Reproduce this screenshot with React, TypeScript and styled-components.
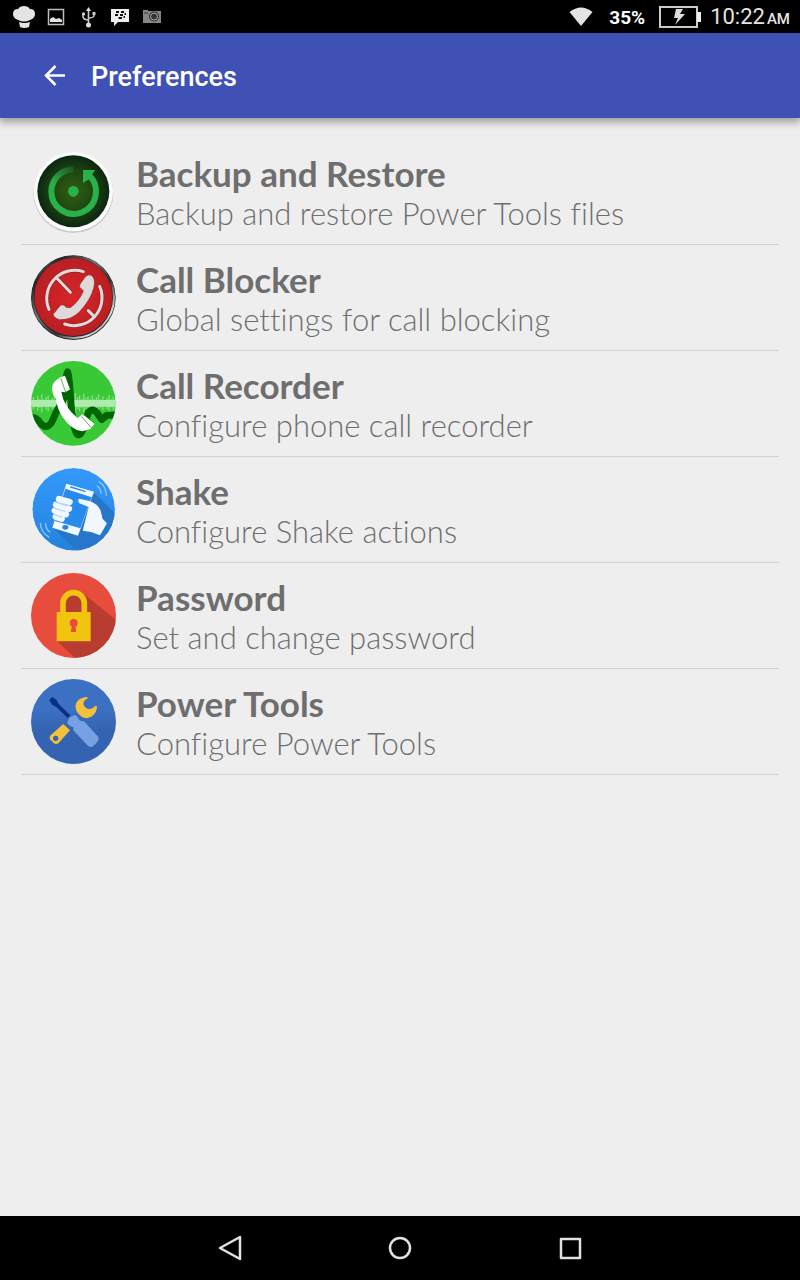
import React from "react";
import styled, { createGlobalStyle } from "styled-components";

const GlobalStyle = createGlobalStyle`
  * { box-sizing: border-box; }
  body { margin: 0; background: #eeeeee; font-family: Roboto, sans-serif; }
`;

const Screen = styled.div`
  display: flex;
  flex-direction: column;
  min-height: 100vh;
`;

const StatusBar = styled.div`
  display: flex;
  align-items: center;
  justify-content: space-between;
  height: 33px;
  padding: 0 10px 0 12px;
  background: #000;
  color: #e4e4e4;
`;

const StatusGroup = styled.div<{ $gap: number }>`
  display: flex;
  align-items: center;
  gap: ${(p) => p.$gap}px;
  svg { display: block; }
`;

const Percent = styled.span`
  color: #fff;
  font-size: 19px;
  line-height: 24px;
  font-weight: 700;
  padding: 2px 0 0 2px;
`;

const Clock = styled.span`
  font-size: 22px;
  line-height: 24px;
  padding-top: 2px;
  white-space: nowrap;
  small { font-size: 15px; font-weight: 500; padding-left: 2px; }
`;

const AppBar = styled.header`
  display: flex;
  align-items: center;
  gap: 20px;
  height: 85px;
  padding: 0 39px;
  background: #3f51b5;
  box-shadow: 0 3px 8px 1px rgba(0, 0, 0, 0.35);
`;

const IconButton = styled.button`
  display: flex;
  align-items: center;
  justify-content: center;
  width: 32px;
  height: 32px;
  padding: 0;
  border: 0;
  background: none;
  cursor: pointer;
`;

const Title = styled.h1`
  margin: 0;
  padding-top: 2px;
  color: #fff;
  font-size: 27px;
  line-height: 32px;
  font-weight: 500;
`;

const PreferenceList = styled.ul`
  flex: 1;
  margin: 0;
  padding: 21px;
  list-style: none;
`;

const PreferenceItem = styled.li`
  border-bottom: 1px solid #d3d3d3;
`;

const PreferenceLink = styled.a`
  display: flex;
  align-items: center;
  gap: 20px;
  padding: 10px;
  text-decoration: none;
  color: #6e6e6e;
  font-family: Lato, sans-serif;
  font-variant-ligatures: none;
`;

const Picture = styled.svg`
  display: block;
  flex: none;
  width: 85px;
  height: 85px;
`;

const Labels = styled.span`
  display: flex;
  flex-direction: column;
  padding-top: 2px;
`;

const Name = styled.span`
  font-size: 35px;
  line-height: 40px;
  font-weight: 700;
`;

const Summary = styled.span`
  font-size: 31px;
  line-height: 40px;
  font-weight: 300;
`;

const NavBar = styled.nav`
  display: flex;
  justify-content: center;
  align-items: center;
  gap: 106px;
  height: 64px;
  background: #000;
`;

const NavButton = styled(IconButton)`
  width: 64px;
  height: 64px;
`;

const BackupIcon = () => (
  <Picture viewBox="33 27 255 255" aria-hidden="true">
    <defs>
      <radialGradient id="bk"><stop offset="0" stopColor="#315f12" /><stop offset=".55" stopColor="#1f4712" /><stop offset="1" stopColor="#0b2710" /></radialGradient>
      <linearGradient id="bkFade" x1="100" y1="130" x2="162" y2="85" gradientUnits="userSpaceOnUse"><stop offset="0" stopColor="#29ae4a" /><stop offset="1" stopColor="#29ae4a" stopOpacity=".15" /></linearGradient>
    </defs>
    <circle cx="160" cy="159" r="120" fill="#c9c9c9" />
    <circle cx="160" cy="155" r="119" fill="#fafafa" />
    <circle cx="160" cy="154" r="108" fill="url(#bk)" />
    <path d="M94 155A67 67 0 0 1 161 88" fill="none" stroke="url(#bkFade)" strokeWidth="18" />
    <path d="M94 154A67 67 0 1 0 208 107" fill="none" stroke="#29b24b" strokeWidth="18" />
    <path d="M189 90H225L216 104L222 111L207 118L189 129Z" fill="#29b24b" />
    <circle cx="160" cy="154" r="16" fill="#29b24b" />
  </Picture>
);

const BlockerIcon = () => (
  <Picture viewBox="33 30 255 255" aria-hidden="true">
    <defs>
      <radialGradient id="bl"><stop offset="0" stopColor="#d92527" /><stop offset="1" stopColor="#b91f23" /></radialGradient>
      <linearGradient id="blRim" x1="0" y1="0" x2="1" y2="1"><stop offset="0" stopColor="#aaa" /><stop offset=".18" stopColor="#252525" /><stop offset=".4" stopColor="#777" /><stop offset=".62" stopColor="#333" /><stop offset=".82" stopColor="#ddd" /><stop offset="1" stopColor="#222" /></linearGradient>
    </defs>
    <circle cx="160" cy="158" r="127" fill="#292526" />
    <circle cx="160" cy="157" r="122" fill="none" stroke="url(#blRim)" strokeWidth="6" />
    <circle cx="160" cy="156" r="117" fill="url(#bl)" />
    <g fill="none" stroke="#9c1d20" strokeWidth="13" strokeLinecap="round">
      <path d="M87 193A84 84 0 0 1 190 80M108 97L151 142M239 124A84 84 0 0 1 134 237M205 197L222 214" />
    </g>
    <g fill="none" stroke="#dedada" strokeWidth="9" strokeLinecap="round">
      <path d="M87 193A84 84 0 0 1 190 80M108 97L151 142M239 124A84 84 0 0 1 134 237M205 197L222 214" />
    </g>
    <path d="M197 94Q207 85 217 93Q228 105 221 130Q212 165 178 201Q153 226 118 224Q102 220 99 208L122 180Q131 176 139 187L151 188Q179 167 190 137L178 126Q178 119 183 113Z" fill="#dedada" stroke="#9c1d20" strokeWidth="2" />
  </Picture>
);

const waveHeights = [10, 18, 9, 22, 13, 27, 12, 19, 24, 10, 16, 28, 12, 20, 13, 18, 9, 22, 13, 25, 15, 30, 18, 24, 14, 29, 17, 21, 12, 24, 14, 19, 27, 12, 21, 9, 17, 25, 12, 20, 11];

const RecorderIcon = () => (
  <Picture viewBox="33 33 255 255" aria-hidden="true">
    <defs><clipPath id="rc"><circle cx="160" cy="160" r="127" /></clipPath></defs>
    <g clipPath="url(#rc)">
      <path d="M33 33H288V288H33Z" fill="#39c936" />
      <path d="M33 150H288V170H33Z" fill="#b0ecaf" />
      {waveHeights.map((h, i) => (
        <path key={i} d={`M${34 + i * 6.3} ${160 - h}V${160 + h}`} stroke="#b0ecaf" strokeWidth="4" opacity=".65" />
      ))}
      <path d="M30 202Q48 200 60 218Q82 244 98 211Q113 173 125 161C139 145 132 90 143 66C155 110 147 197 169 249C184 272 194 218 204 190Q215 171 231 188L245 209L260 196H292" fill="none" stroke="#006500" strokeWidth="21" strokeLinejoin="round" />
      <path d="M121 82L135 77L151 118L136 127L124 125Q130 168 173 205L187 192L224 221L211 237L187 244Q155 242 126 199Q111 174 107 144Q94 131 97 108Q101 93 121 82Z" fill="#fff" />
      <path d="M122 84L137 126M184 199L214 233M137 78L150 117M191 191L224 220" fill="none" stroke="#168216" strokeWidth="2" />
    </g>
  </Picture>
);

const ShakeIcon = () => (
  <Picture viewBox="33 30 255 255" aria-hidden="true">
    <defs>
      <linearGradient id="sh" x2="0" y2="1"><stop stopColor="#3399fb" /><stop offset="1" stopColor="#2482de" /></linearGradient>
      <clipPath id="shClip"><circle cx="161" cy="157" r="124" /></clipPath>
    </defs>
    <g clipPath="url(#shClip)">
      <circle cx="161" cy="157" r="124" fill="url(#sh)" />
      <path d="M220 104L300 184V290H178L98 209L175 220Z" fill="#2677c9" />
      <path d="M139 80L222 104L174 236L97 212Z" fill="#f2f8ff" />
      <path d="M136 95L215 121L181 214L105 192Z" fill="#288aec" />
      <path d="M152 90L195 103" stroke="#288aec" strokeWidth="4" strokeLinecap="round" />
      <ellipse cx="136" cy="211" rx="9" ry="7" fill="#2686e6" />
      <path d="M117 126L149 135M108 143L147 155M104 161L138 172M107 179L125 185" stroke="#f2f8ff" strokeWidth="19" strokeLinecap="round" />
      <path d="M105 135L142 147M101 153L137 164M101 172L127 181" stroke="#75b6f5" strokeWidth="2" />
      <path d="M178 125L208 132Q233 140 242 161L248 186L261 199L240 235L213 225L188 221L197 186L206 150L178 139Q171 129 178 125Z" fill="#f2f8ff" />
      <path d="M236 73Q259 87 259 117M231 86Q244 96 243 111M61 198Q61 225 88 241M77 199Q76 217 91 226" fill="none" stroke="#8bc6ff" strokeWidth="4" />
    </g>
  </Picture>
);

const PasswordIcon = () => (
  <Picture viewBox="33 30 255 255" aria-hidden="true">
    <defs><clipPath id="pw"><circle cx="160.5" cy="157.5" r="127.5" /></clipPath></defs>
    <g clipPath="url(#pw)">
      <path d="M33 30H288V285H33Z" fill="#e84c3d" />
      <path d="M192 93L300 181V300H182L111 234Z" fill="#b83c30" />
      <path d="M129 148V121A32 32 0 0 1 193 121V148" fill="#b83c30" stroke="#f1c40f" strokeWidth="17" />
      <path d="M110 147H212V235H110Z" fill="#f1c40f" />
      <circle cx="161" cy="180" r="12" fill="#e84c3d" />
      <path d="M157 183H165L169 207H152Z" fill="#e84c3d" />
    </g>
  </Picture>
);

const ToolsIcon = () => (
  <Picture viewBox="33 30 255 255" aria-hidden="true">
    <defs><linearGradient id="tl" x2="0" y2="1"><stop offset=".35" stopColor="#3b70c3" /><stop offset=".6" stopColor="#3464b1" /></linearGradient></defs>
    <circle cx="160.5" cy="157.5" r="127.5" fill="url(#tl)" />
    <path d="M194 85L201 84L204 88Q191 93 190 105Q193 117 205 120Q218 120 226 110L231 112Q231 130 216 142Q202 151 187 145L176 135Q165 123 167 107Q172 89 194 85Z" fill="#f5c13d" />
    <path d="M130 165L150 184L115 223Q108 228 101 222L90 211Q86 205 92 199Z" fill="#f5c13d" />
    <circle cx="107" cy="208" r="8" fill="#3464b1" />
    <path d="M88 92L97 84L109 92L116 105L151 139L143 147L109 114L96 107Z" fill="#092f87" />
    <path d="M146 151Q152 139 168 139L180 155L192 157L233 202Q240 211 231 220L219 232Q210 237 202 229L160 184V175Q141 169 142 159Z" fill="#76a2e4" />
  </Picture>
);

const preferences = [
  { id: "backup", name: "Backup and Restore", summary: "Backup and restore Power Tools files", Icon: BackupIcon },
  { id: "blocker", name: "Call Blocker", summary: "Global settings for call blocking", Icon: BlockerIcon },
  { id: "recorder", name: "Call Recorder", summary: "Configure phone call recorder", Icon: RecorderIcon },
  { id: "shake", name: "Shake", summary: "Configure Shake actions", Icon: ShakeIcon },
  { id: "password", name: "Password", summary: "Set and change password", Icon: PasswordIcon },
  { id: "tools", name: "Power Tools", summary: "Configure Power Tools", Icon: ToolsIcon },
];

const Notifications = () => (
  <StatusGroup $gap={0}>
    <svg width="152" height="33" viewBox="12 0 152 33" aria-hidden="true">
      <g fill="#e4e4e4">
        <path d="M18 20Q13 18 13 14Q13 9 18 9Q20 6 24 6Q28 6 30 9Q35 9 35 14Q35 18 30 20Q24 23 18 20Z" />
        <path d="M19 22Q24 24 30 22L29 27Q24 29 20 27Z" />
        <path d="M50 22V19L53 17L56 19L59 18L62 20V22Z" />
      </g>
      <path d="M48.500 9.500H63.500V24.500H48.500Z" fill="none" stroke="#bdbdbd" strokeWidth="1.500" />
      <g fill="none" stroke="#c9c9c9" strokeWidth="1.600">
        <path d="M88.500 9V25M83 14V17Q84 20 88.500 20M94 13V16Q93 18 88.500 18" />
      </g>
      <path d="M88.500 7L91 11H86Z" fill="#ddd" />
      <circle cx="88.500" cy="25" r="2.500" fill="#ddd" />
      <circle cx="83.500" cy="14" r="1.700" fill="#ccc" />
      <path d="M92.500 12H95.500V15H92.500Z" fill="#ccc" />
      <path d="M111 9H129V22H118L114 26V22H111Z" fill="#eee" />
      <path d="M116 12H119M121 12H124M115 15H118M120 15H123M124.500 14H126M118.500 18H122M123.500 17H125" stroke="#111" strokeWidth="2" />
      <path d="M143 12V10H148V11H161V23H143Z" fill="#858585" />
      <circle cx="154" cy="16.500" r="5" fill="#333" />
      <circle cx="154" cy="16.500" r="3.500" fill="none" stroke="#aaa" />
      <path d="M144 13H148" stroke="#333" />
    </svg>
  </StatusGroup>
);

export default function App() {
  return (
    <Screen>
      <GlobalStyle />
      <StatusBar>
        <Notifications />
        <StatusGroup $gap={14}>
          <svg width="24" height="20" viewBox="570 6 24 20" aria-hidden="true">
            <path d="M570.500 11Q582 2 593.500 11L582 25Z" fill="#e4e4e4" />
          </svg>
          <Percent>35%</Percent>
          <StatusGroup $gap={8}>
            <svg width="43" height="24" viewBox="660 4 43 24" aria-hidden="true">
              <path d="M661 6H698V26H661Z" fill="none" stroke="#ccc" strokeWidth="2" />
              <path d="M698 11H702V21H698Z" fill="#eee" />
              <path d="M677 8H684L681 13H686L676 24L679 17H675Z" fill="#ddd" />
            </svg>
            <Clock>10:22<small>AM</small></Clock>
          </StatusGroup>
        </StatusGroup>
      </StatusBar>
      <AppBar>
        <IconButton type="button" aria-label="Back">
          <svg width="24" height="24" viewBox="0 0 24 24" fill="none" stroke="#fff" strokeWidth="2.500">
            <path d="M22 11.500H4M12.500 2L3 11.500L12.500 21" />
          </svg>
        </IconButton>
        <Title>Preferences</Title>
      </AppBar>
      <PreferenceList>
        {preferences.map(({ id, name, summary, Icon }) => (
          <PreferenceItem key={id}>
            <PreferenceLink href={`#${id}`}>
              <Icon />
              <Labels>
                <Name>{name}</Name>
                <Summary>{summary}</Summary>
              </Labels>
            </PreferenceLink>
          </PreferenceItem>
        ))}
      </PreferenceList>
      <NavBar>
        <NavButton type="button" aria-label="Back">
          <svg width="26" height="28" viewBox="0 0 26 28" fill="none" stroke="#e2e2e2" strokeWidth="2.500" strokeLinejoin="round">
            <path d="M23 3V25L3 14Z" />
          </svg>
        </NavButton>
        <NavButton type="button" aria-label="Home">
          <svg width="26" height="26" viewBox="0 0 26 26" fill="none" stroke="#e2e2e2" strokeWidth="2.500">
            <circle cx="13" cy="13" r="10" />
          </svg>
        </NavButton>
        <NavButton type="button" aria-label="Recent apps">
          <svg width="26" height="26" viewBox="0 0 26 26" fill="none" stroke="#e2e2e2" strokeWidth="2.500" strokeLinejoin="round">
            <path d="M4 4H23V23H4Z" />
          </svg>
        </NavButton>
      </NavBar>
    </Screen>
  );
}
